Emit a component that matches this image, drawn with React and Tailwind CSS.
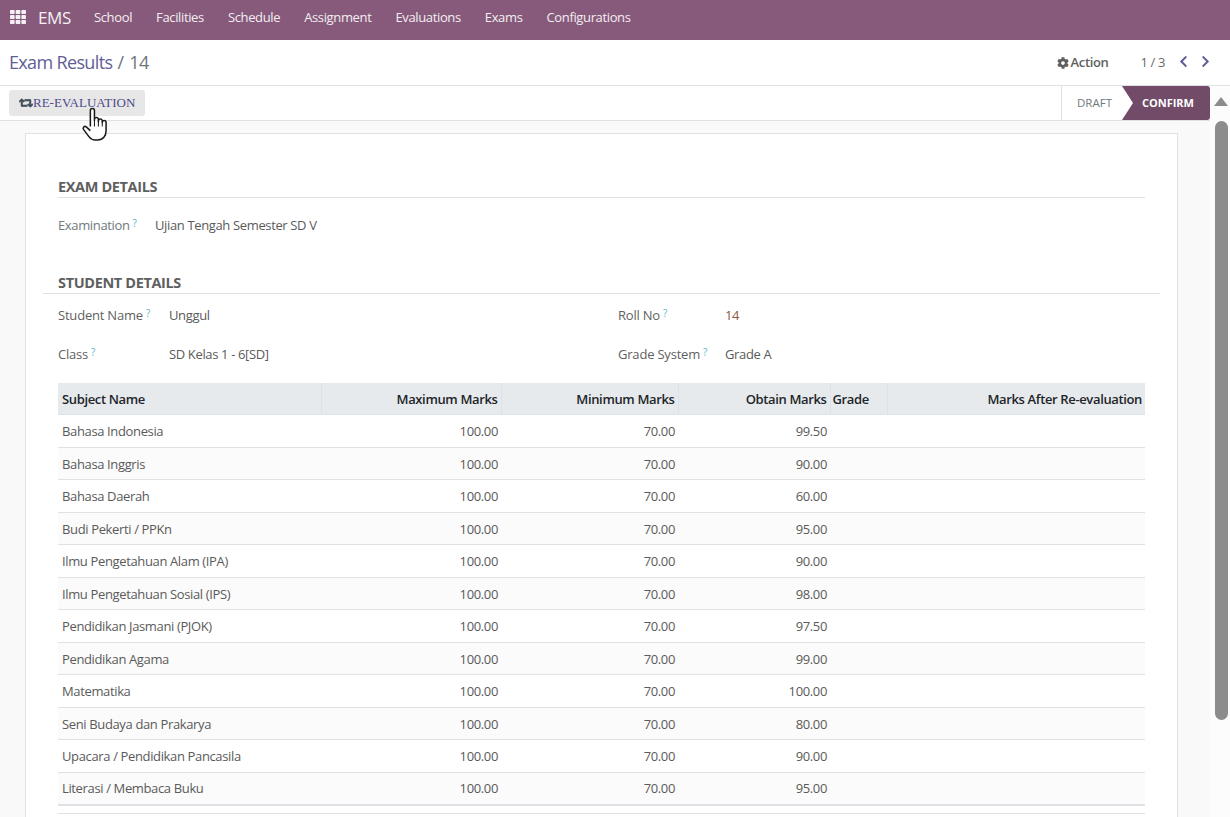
import React from "react";
import { FaTh, FaCog, FaRetweet, FaChevronLeft, FaChevronRight } from "react-icons/fa";

const nav = ["School", "Facilities", "Schedule", "Assignment", "Evaluations", "Exams", "Configurations"];
const rows = [
  ["Bahasa Indonesia", "99.50"],
  ["Bahasa Inggris", "90.00"],
  ["Bahasa Daerah", "60.00"],
  ["Budi Pekerti / PPKn", "95.00"],
  ["Ilmu Pengetahuan Alam (IPA)", "90.00"],
  ["Ilmu Pengetahuan Sosial (IPS)", "98.00"],
  ["Pendidikan Jasmani (PJOK)", "97.50"],
  ["Pendidikan Agama", "99.00"],
  ["Matematika", "100.00"],
  ["Seni Budaya dan Prakarya", "80.00"],
  ["Upacara / Pendidikan Pancasila", "90.00"],
  ["Literasi / Membaca Buku", "95.00"],
];

function Help() {
  return <sup className="ml-[3px] text-[10px] text-[#5fb3c9] leading-none relative -top-[3px]">?</sup>;
}

function Field({ label, value, labelW, muted, valueClass = "text-[#5a5a5a]" }) {
  return (
    <div className="flex items-center h-[20px]">
      <div className={`${labelW} whitespace-nowrap ${muted ? "text-[#6f7a7d]" : "text-[#5f5f5f] font-medium tracking-[-0.2px]"}`}>
        {label}
        <Help />
      </div>
      <div className={valueClass}>{value}</div>
    </div>
  );
}

function Th({ children, w, left, last, pad = "px-[3px]" }) {
  return (
    <th
      className={`${w} h-[31.5px] ${pad} pt-[2px] font-semibold text-[#212529] ${left ? "text-left" : "text-right"} ${last ? "" : "border-r border-[#dee2e6]"}`}
    >
      {children}
    </th>
  );
}

export default function App() {
  return (
    <div
      className="h-screen w-full overflow-hidden flex flex-col bg-white text-[13px] tracking-[-0.36px] text-[#5a5a5a]"
      style={{ fontFamily: '"Open Sans", sans-serif' }}
    >
      <header className="h-[40px] shrink-0 bg-[#875a7b] flex items-center text-white pb-[5px]">
        <FaTh className="ml-[10px] text-[16px] text-[#f4eff3] -mt-[1px]" />
        <span className="ml-[12px] text-[17px] text-[#f5f0f4]">EMS</span>
        <nav className="ml-[23px] flex gap-[24px] text-[#f3eef2]">
          {nav.map((n) => (
            <span key={n}>{n}</span>
          ))}
        </nav>
      </header>

      <div className="h-[46px] shrink-0 border-b border-[#dee2e6] flex items-center pl-[9px] pr-[18px]">
        <div className="text-[18px] tracking-[-0.65px] text-[#5f5e97]">
          Exam Results <span className="text-[#6c757d] ml-[1px]">/<span className="ml-[6px]">14</span></span>
        </div>
        <div className="ml-auto flex items-center text-[#5f5f5f]">
          <FaCog className="text-[12px] mr-[2px]" />
          <span className="font-semibold">Action</span>
          <span className="ml-[32px] text-[#6a6a6a]">1 / 3</span>
          <FaChevronLeft className="ml-[12px] text-[13px] text-[#5f5e97] -mt-[3px]" />
          <FaChevronRight className="ml-[9px] text-[13px] text-[#5f5e97] -mt-[3px]" />
        </div>
      </div>

      <div className="flex-1 min-h-0 flex">
        <div className="flex-1 min-w-0 flex flex-col">
          <div className="h-[35px] shrink-0 border-b border-[#dee2e6] flex items-center justify-between pl-[9px] relative">
            <button
              className="h-[26px] w-[136px] rounded-[3px] bg-[#e7e7e7] flex items-center pl-[10px] text-[#4b4a8a] text-[13px] tracking-[0px]"
              style={{ fontFamily: '"Liberation Serif", serif' }}
            >
              <FaRetweet className="text-[14px] text-[#3f4c58] shrink-0 stroke-[30px]" />
              <span>RE-EVALUATION</span>
            </button>
            <svg className="absolute left-[81px] top-[20px]" width="30" height="36" viewBox="0 0 29 35">
              <path
                d="M9 20V4.500a2 2 0 0 1 4 0V14l0-1.500a2 2 0 0 1 3.800 0V15l0-1a2 2 0 0 1 3.800 0v2l0-.500a1.900 1.900 0 0 1 3.700 0V24c0 5-3 9-8 9h-2.500c-3 0-4.500-1-6-3L2.500 23c-1.500-2 .800-4 2.500-2.700L9 24"
                fill="#fff"
                stroke="#1a1a1a"
                strokeWidth="1.500"
                strokeLinejoin="round"
              />
              <path d="M13 14v6M16.800 15v5M20.600 16v4" stroke="#1a1a1a" strokeWidth="1" fill="none" />
            </svg>
            <div className="h-[34px] flex items-stretch self-start tracking-normal">
              <div className="w-[61px] border-l border-[#dee2e6] flex items-center pl-[15px] text-[11.5px] font-medium text-[#6f7a7d]">
                DRAFT
              </div>
              <div
                className="w-[88px] bg-[#714b67] flex items-center justify-end pr-[16px] text-[11px] font-bold text-white rounded-r-[3px]"
                style={{ clipPath: "polygon(0 0, 100% 0, 100% 100%, 0 100%, 11px 50%)" }}
              >
                CONFIRM
              </div>
            </div>
          </div>

          <main className="flex-1 min-h-0 overflow-hidden bg-[#f9f9f9] pt-[12px] pl-[25px] pr-[32px]">
            <div className="bg-white border border-[#dee2e6] pt-[44px] px-[32px] h-[800px]">
              <section>
                <h2 className="h-[19px] border-b border-[#dee2e6] font-bold text-[#5f5f5f] text-[14.5px] leading-[20px] box-content pb-[1px] -mt-[1px]">
                  EXAM DETAILS
                </h2>
                <div className="mt-[18px]">
                  <Field label="Examination" value="Ujian Tengah Semester SD V" labelW="w-[97px]" muted />
                </div>
              </section>

              <section className="mt-[38px]">
                <h2 className="h-[18px] -mx-[15px] px-[15px] border-b border-[#dee2e6] font-bold text-[#5f5f5f] text-[14.5px] leading-[18px] box-content pb-[1px]">
                  STUDENT DETAILS
                </h2>
                <div className="mt-[12px] grid grid-cols-[560px_1fr] gap-y-[19px]">
                  <Field label="Student Name" value="Unggul" labelW="w-[111px]" />
                  <Field label="Roll No" value="14" labelW="w-[107px]" valueClass="text-[#8a5a44]" />
                  <Field label="Class" value="SD Kelas 1 - 6[SD]" labelW="w-[111px]" />
                  <Field label="Grade System" value="Grade A" labelW="w-[107px]" />
                </div>
              </section>

              <table className="mt-[18px] w-[1087px] table-fixed border-collapse">
                <thead>
                  <tr className="bg-[#e7eaed] border-b border-[#dee2e6]">
                    <Th w="w-[263px]" left pad="px-[4px]">Subject Name</Th>
                    <Th w="w-[180px]">Maximum Marks</Th>
                    <Th w="w-[177px]">Minimum Marks</Th>
                    <Th w="w-[152px]">Obtain Marks</Th>
                    <Th w="w-[57px]" left pad="px-[2px]">Grade</Th>
                    <Th w="w-[258px]" last>Marks After Re-evaluation</Th>
                  </tr>
                </thead>
                <tbody>
                  {rows.map(([name, mark], i) => (
                    <tr key={name} className={`h-[32.5px] border-b border-[#dee2e6] ${i % 2 ? "bg-[#fbfbfb]" : "bg-white"}`}>
                      <td className="px-[4px] pt-[2px]">{name}</td>
                      <td className="px-[3px] pt-[2px] text-right">100.00</td>
                      <td className="px-[3px] pt-[2px] text-right">70.00</td>
                      <td className="px-[3px] pt-[2px] text-right">{mark}</td>
                      <td className="px-[4px]"></td>
                      <td className="px-[4px]"></td>
                    </tr>
                  ))}
                </tbody>
                <tfoot>
                  <tr className="h-[9px] border-t-2 border-b border-[#dee2e6]">
                    <td colSpan={6}></td>
                  </tr>
                </tfoot>
              </table>
            </div>
          </main>
        </div>

        <aside className="w-[20px] shrink-0 bg-[#fcfcfc] flex flex-col items-center">
          <div
            className="mt-[11px] w-[14px] h-[9px] bg-[#8c8c8c] ml-[2px]"
            style={{ clipPath: "polygon(50% 0, 100% 100%, 0 100%)" }}
          />
          <div className="mt-[15px] w-[13px] h-[599px] rounded-full bg-[#8c8c8c] ml-[2px]" />
        </aside>
      </div>
    </div>
  );
}
